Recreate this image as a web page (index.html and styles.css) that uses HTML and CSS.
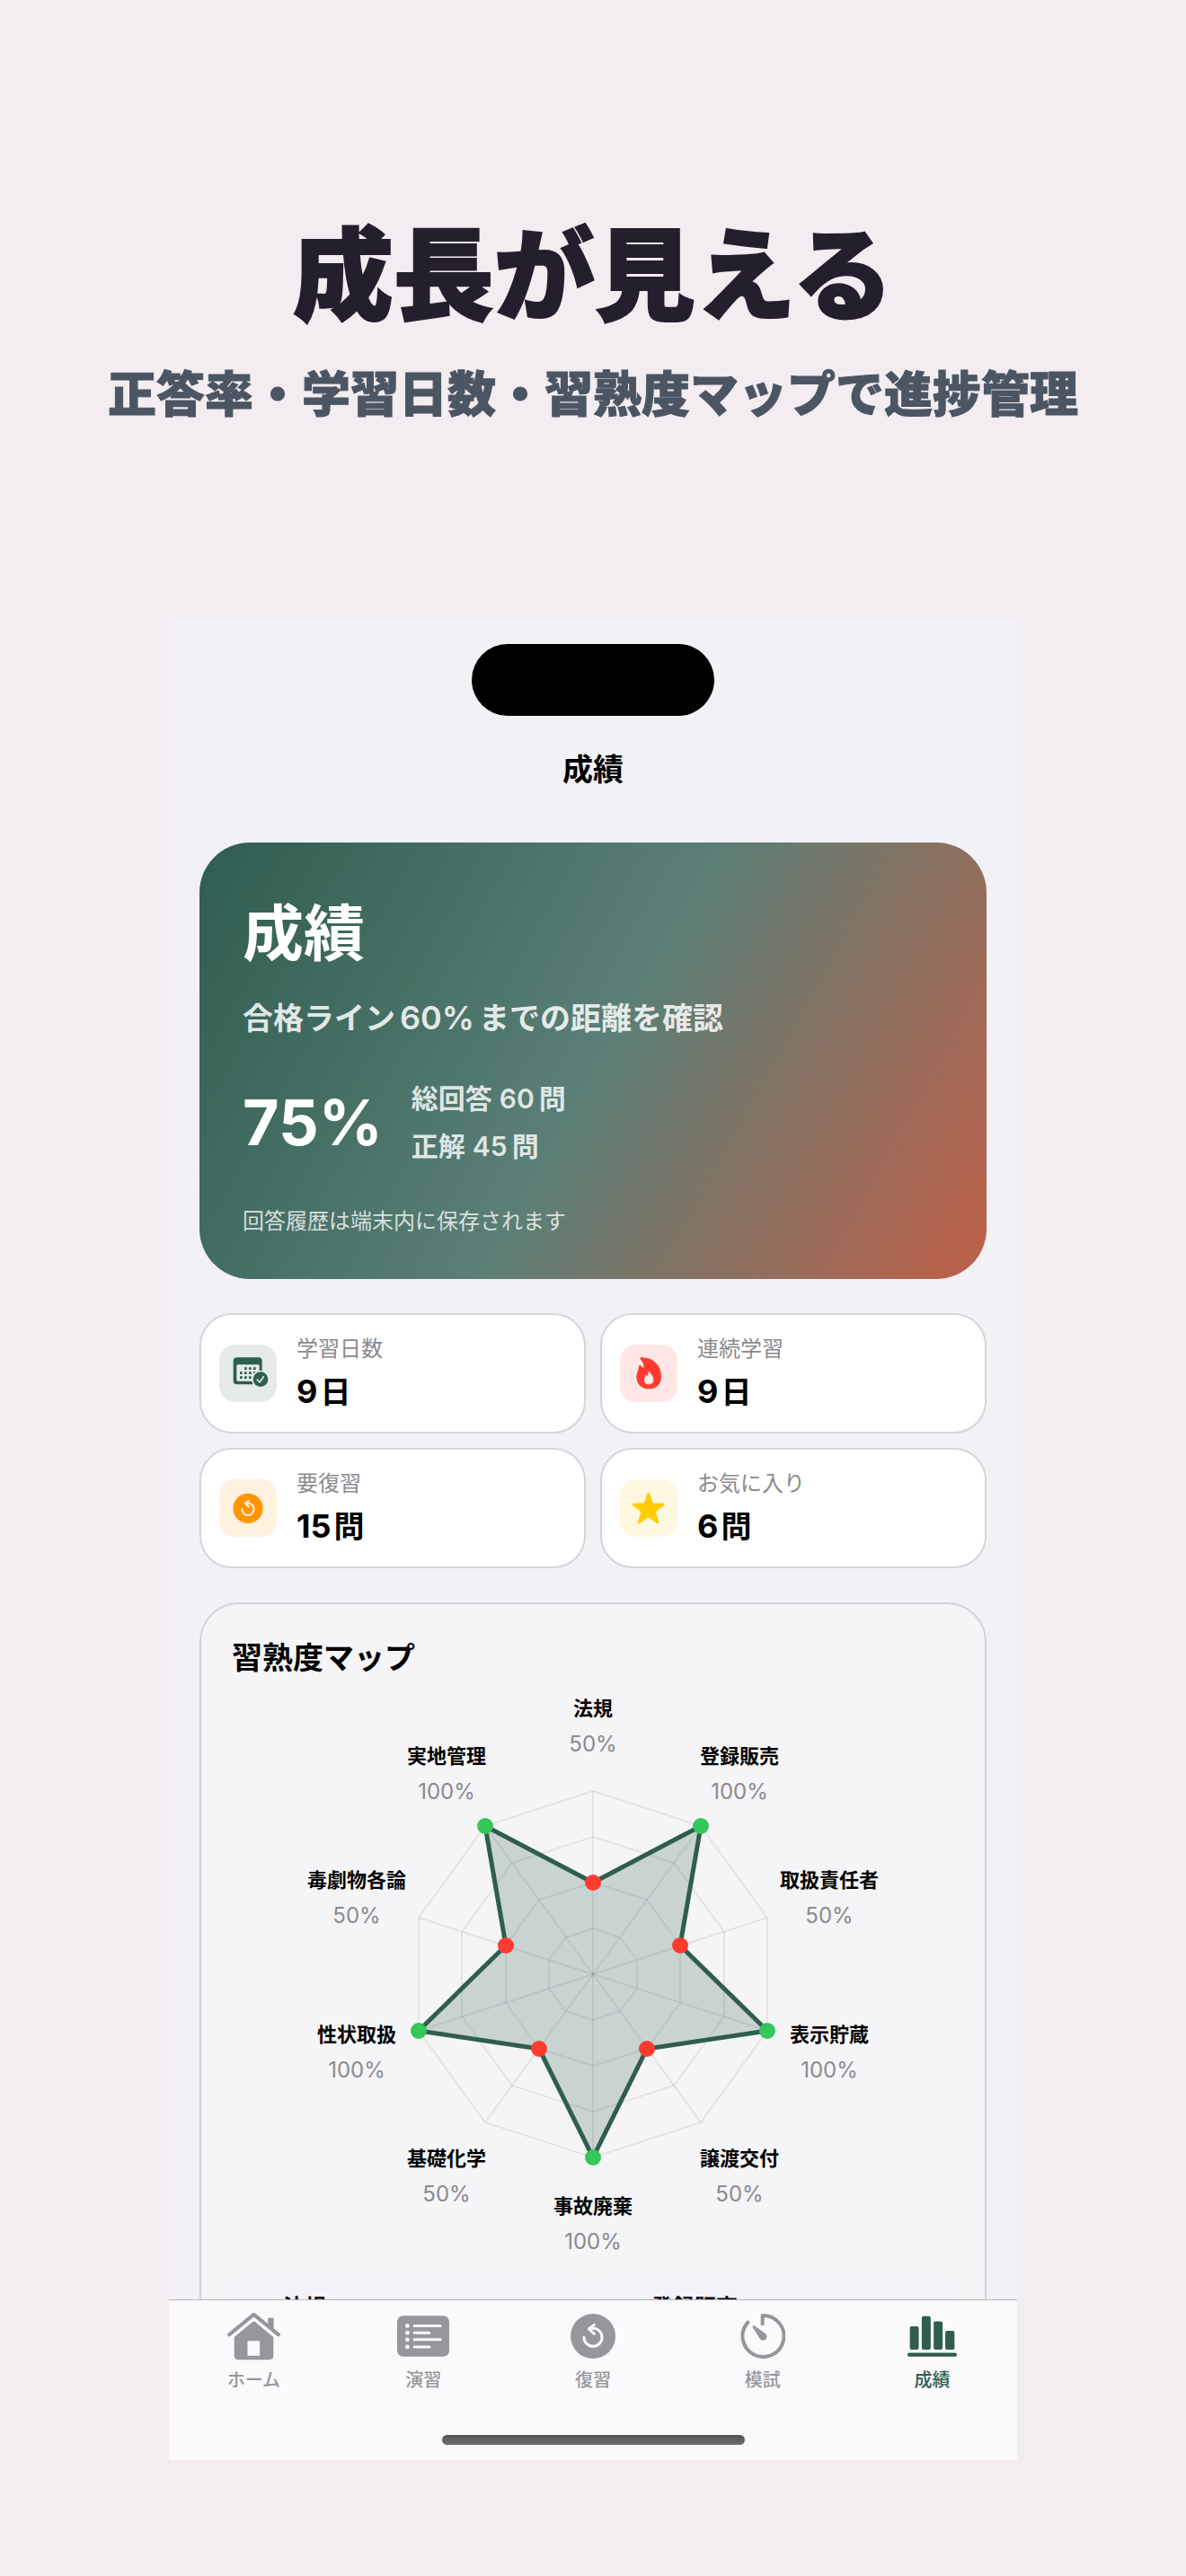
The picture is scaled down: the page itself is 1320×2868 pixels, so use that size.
FILE: index.html
```html
<!DOCTYPE html>
<html lang="ja">
<head>
  <meta charset="utf-8">
  <meta name="viewport" content="width=device-width, initial-scale=1">
  <title>成績</title>
  <link rel="stylesheet" href="styles.css">
</head>
<body>
  <svg class="defs" aria-hidden="true">
    <symbol id="retry" viewBox="0 0 150 150">
      <circle cx="75" cy="75" r="75" fill="currentColor"/>
      <path d="M45 79a30 30 0 1 0 30-30l-12 1" fill="none" stroke="var(--hole)" stroke-width="9" stroke-linecap="round"/>
      <path d="M79 37L61 51l18 16" fill="none" stroke="var(--hole)" stroke-width="9" stroke-linecap="round" stroke-linejoin="round"/>
    </symbol>
  </svg>

  <header class="intro">
    <h1>成長が見える</h1>
    <p>正答率・学習日数・習熟度マップで進捗管理</p>
  </header>

  <div class="phone">
    <div class="island"></div>
    <div class="nav-title">成績</div>

    <main class="screen">
      <section class="hero">
        <h2>成績</h2>
        <p class="hero-lead">合格ライン<span class="num">60%</span>までの距離を確認</p>
        <div class="score">
          <strong>75%</strong>
          <div class="score-detail">
            <p>総回答<span class="num">60</span>問</p>
            <p>正解<span class="num">45</span>問</p>
          </div>
        </div>
        <p class="hero-note">回答履歴は端末内に保存されます</p>
      </section>

      <section class="stats">
        <div class="stat">
          <div class="stat-icon green">
            <svg viewBox="0 0 192 192">
              <path fill="currentColor" fill-rule="evenodd" d="M59 43h72q12 0 12 12v66q0 12-12 12H59q-12 0-12-12V55q0-12 12-12zM62 67q-4 0-4 4v47q0 4 4 4h68q4 0 4-4V71q0-4-4-4z"/>
              <path fill="currentColor" d="M84 76h8v8h-8zM99 76h8v8h-8zM114 76h8v8h-8zM69 91h8v8h-8zM84 91h8v8h-8zM99 91h8v8h-8zM114 91h8v8h-8zM69 106h8v8h-8zM84 106h8v8h-8zM99 106h8v8h-8z"/>
              <circle cx="138" cy="116" r="30" fill="var(--hole)"/>
              <circle cx="138" cy="116" r="25" fill="currentColor"/>
              <path d="M127 117l8 9 13-19" fill="none" stroke="var(--hole)" stroke-width="5" stroke-linecap="round" stroke-linejoin="round"/>
            </svg>
          </div>
          <div class="stat-text">
            <span class="stat-label">学習日数</span>
            <span class="stat-value"><span class="num">9</span>日</span>
          </div>
        </div>
        <div class="stat">
          <div class="stat-icon red">
            <svg viewBox="0 0 192 192">
              <path fill="currentColor" d="M67 47C64 43 71 42 76 43C112 45 138 70 138 107C138 132 121 148 97 148C72 148 55 132 55 107C55 95 62 88 63 73C63 68 68 68 71 71C73 74 76 76 79 77C81 63 74 56 67 47z"/>
              <path fill="var(--hole)" d="M94 92C95 89 98 91 100 94C107 101 112 109 112 117C112 127 105 133 96 133C87 133 81 127 81 119C81 111 84 108 85 103C88 101 90 103 91 106C95 102 94 97 94 92z"/>
            </svg>
          </div>
          <div class="stat-text">
            <span class="stat-label">連続学習</span>
            <span class="stat-value"><span class="num">9</span>日</span>
          </div>
        </div>
        <div class="stat">
          <div class="stat-icon orange">
            <svg viewBox="0 0 192 192"><use href="#retry" x="46" y="47" width="100" height="100"/></svg>
          </div>
          <div class="stat-text">
            <span class="stat-label">要復習</span>
            <span class="stat-value"><span class="num">15</span>問</span>
          </div>
        </div>
        <div class="stat">
          <div class="stat-icon yellow">
            <svg viewBox="0 0 192 192">
              <path fill="currentColor" stroke="currentColor" stroke-width="8" stroke-linejoin="round" d="M95 49L107 83L145 84L115 107L126 144L95 122L64 144L75 107L45 84L83 83z"/>
            </svg>
          </div>
          <div class="stat-text">
            <span class="stat-label">お気に入り</span>
            <span class="stat-value"><span class="num">6</span>問</span>
          </div>
        </div>
      </section>

      <section class="map">
        <h2>習熟度マップ</h2>
        <svg class="radar" viewBox="0 0 804 644" role="img" aria-label="習熟度マップ">
          <g id="grid" class="grid"></g>
          <g id="area"></g>
          <g id="labels"></g>
        </svg>
        <div class="subjects">
          <div class="subject">法規</div>
          <div class="subject">登録販売</div>
        </div>
      </section>
    </main>

    <nav class="tabs">
      <a href="#home">
        <svg width="59" height="53" viewBox="0 0 176 158">
          <path d="M6 74L88 7l82 67" fill="none" stroke="currentColor" stroke-width="12" stroke-linecap="round" stroke-linejoin="round"/>
          <path fill="currentColor" d="M135 46V22q0-4 4-4h11q4 0 4 4v39z"/>
          <path fill="currentColor" fill-rule="evenodd" d="M23 82L83 32q5-4 10 0l60 50v62q0 13-13 13H36q-13 0-13-13zM70 95q-3 0-3 3v46h41V98q0-3-3-3z"/>
        </svg>
        <span>ホーム</span>
      </a>
      <a href="#practice">
        <svg width="58" height="45" viewBox="0 0 173 135">
          <rect width="173" height="135" rx="20" fill="currentColor"/>
          <g fill="var(--hole)">
            <circle cx="34" cy="33" r="7"/><circle cx="34" cy="56" r="7"/><circle cx="34" cy="79" r="7"/><circle cx="34" cy="103" r="7"/>
          </g>
          <path d="M57 33h87M57 56h50M57 79h87M57 103h50" stroke="var(--hole)" stroke-width="9" stroke-linecap="round"/>
        </svg>
        <span>演習</span>
      </a>
      <a href="#review">
        <svg width="50" height="50"><use href="#retry"/></svg>
        <span>復習</span>
      </a>
      <a href="#exam">
        <svg width="50" height="50" viewBox="0 0 150 150">
          <path d="M74 34V6a69 69 0 1 1-49 23" fill="none" stroke="currentColor" stroke-width="12" stroke-linecap="round" stroke-linejoin="round"/>
          <path fill="currentColor" d="M41 45q-1-7 6-5l35 25a13 13 0 1 1-18 17z"/>
        </svg>
        <span>模試</span>
      </a>
      <a href="#results" class="active">
        <svg width="55" height="46" viewBox="0 0 166 138">
          <g fill="currentColor">
            <rect x="8" y="36" width="30" height="78" rx="6"/>
            <rect x="48" y="2" width="30" height="112" rx="6"/>
            <rect x="88" y="19" width="30" height="95" rx="6"/>
            <rect x="127" y="51" width="31" height="63" rx="6"/>
            <rect y="125" width="166" height="13" rx="6"/>
          </g>
        </svg>
        <span>成績</span>
      </a>
      <div class="home-bar"></div>
    </nav>
  </div>
  <script src="radar.js"></script>
</body>
</html>
```

FILE: styles.css
```css
* {
  box-sizing: border-box;
}
body {
  margin: 0;
  background: #f3ecf0;
  color: #000;
  font-family: Inter, "Noto Sans CJK JP", sans-serif;
  font-size: 24px;
}
h1, h2, p {
  margin: 0;
}
.defs {
  display: none;
}

.intro {
  padding-top: 239px;
  text-align: center;
  font-family: "Noto Sans CJK JP", sans-serif;
  font-weight: 900;
}
.intro h1 {
  color: #241f2d;
  font-size: 112px;
  font-weight: 900;
  line-height: 120px;
  -webkit-text-stroke: 2px #241f2d;
}
.intro p {
  margin-top: 47px;
  color: #4b5563;
  font-size: 54px;
  line-height: 60px;
  -webkit-text-stroke: 1px #4b5563;
}

.phone {
  display: flex;
  flex-direction: column;
  margin: 222px 188px 129px;
  padding-top: 29px;
  aspect-ratio: 944 / 2051;
  background: #f2f1f6;
  overflow: hidden;
}
.island {
  flex: none;
  align-self: center;
  width: 270px;
  height: 80px;
  border-radius: 40px;
  background: #000;
}
.nav-title {
  margin-top: 38px;
  text-align: center;
  font-size: 34px;
  font-weight: 700;
  line-height: 44px;
}
.screen {
  flex: 1;
  min-height: 0;
  padding: 59px 34px 0;
  overflow: hidden;
}
.num {
  font-size: 36px;
  line-height: 1;
}

.hero {
  padding: 61px 48px 48px;
  border-radius: 56px;
  background: linear-gradient(119deg, #2f5d50, #5a7f76 50%, #c06048);
  color: #fff;
}
.hero h2 {
  font-size: 68px;
  line-height: 80px;
}
.hero-lead {
  margin-top: 33px;
  color: rgba(255, 255, 255, .86);
  font-size: 34px;
  font-weight: 600;
  line-height: 44px;
}
.hero-lead .num {
  margin: 0 5px;
}
.score {
  display: flex;
  align-items: center;
  gap: 32px;
  margin-top: 41px;
}
.score strong {
  font-size: 70px;
  line-height: 80px;
}
.score-detail {
  color: rgba(255, 255, 255, .82);
  font-size: 30px;
  font-weight: 600;
  line-height: 53px;
}
.score-detail .num {
  margin: 0 5px 0 8px;
  font-size: 30px;
}
.hero-note {
  margin-top: 41px;
  color: rgba(255, 255, 255, .78);
  font-size: 24px;
  line-height: 32px;
}

.stats {
  display: grid;
  grid-template-columns: 1fr 1fr;
  gap: 16px;
  margin-top: 38px;
}
.stat {
  display: flex;
  align-items: center;
  gap: 22px;
  padding: 20px;
  border: 2px solid #d5d5d9;
  border-radius: 36px;
  background: #fff;
}
.stat-icon {
  width: 64px;
  height: 64px;
  border-radius: 18px;
  background: var(--hole);
}
.stat-icon svg {
  display: block;
}
.green { --hole: #e5ebe9; color: #2f5d50; }
.red { --hole: #ffe7e6; color: #ff3b30; }
.orange { --hole: #fff1e0; color: #ff9500; }
.yellow { --hole: #fff8e0; color: #ffcc00; }
.stat-text {
  display: flex;
  flex-direction: column;
  gap: 8px;
  padding-top: 2px;
}
.stat-label {
  color: #8a8a8e;
  line-height: 32px;
}
.stat-value {
  font-size: 34px;
  font-weight: 700;
  line-height: 48px;
}
.stat-value .num {
  margin-right: 3px;
}

.map {
  margin-top: 38px;
  padding: 38px 34px;
  border: 2px solid #d3d3d7;
  border-radius: 44px;
  background: #f5f5f7;
}
.map h2 {
  font-size: 34px;
  line-height: 44px;
}
.radar {
  display: block;
  width: 100%;
}
.grid {
  fill: none;
  stroke: #000;
  stroke-opacity: .07;
  stroke-width: 2;
}
.area {
  fill: #2f5d50;
  fill-opacity: .22;
  stroke: #2f5d50;
  stroke-width: 5;
  stroke-linejoin: round;
}
.high { fill: #34c759; }
.low { fill: #ff3b30; }
.axis-name {
  font-size: 22px;
  font-weight: 700;
  text-anchor: middle;
}
.axis-value {
  fill: #8a8a8e;
  font-size: 24px;
  text-anchor: middle;
}
.subjects {
  display: grid;
  grid-template-columns: 1fr 1fr;
  gap: 16px;
  margin-top: 16px;
}
.subject {
  padding: 25px 57px;
  border-radius: 26px;
  background: #f3f2f7;
  font-weight: 700;
  line-height: 32px;
}

.tabs {
  --hole: #fafafc;
  flex: none;
  display: grid;
  grid-template-columns: repeat(5, 1fr);
  padding: 13px 0 17px;
  border-top: 1px solid #b7b7bb;
  background: #fafafc;
}
.tabs a {
  display: flex;
  flex-direction: column;
  align-items: center;
  color: #97979b;
  font-size: 20px;
  font-weight: 500;
  line-height: 28px;
  text-decoration: none;
}
.tabs a svg {
  height: 54px;
}
.tabs a span {
  margin-top: 8px;
}
.tabs .active {
  color: #2f5d50;
}
.home-bar {
  grid-column: 1 / -1;
  justify-self: center;
  width: 337px;
  height: 11px;
  margin-top: 47px;
  border-radius: 6px;
  background: linear-gradient(#525252, #707070);
}
```

FILE: radar.js
```js
const subjects = [
  ["法規", 50],
  ["登録販売", 100],
  ["取扱責任者", 50],
  ["表示貯蔵", 100],
  ["譲渡交付", 50],
  ["事故廃棄", 100],
  ["基礎化学", 50],
  ["性状取扱", 100],
  ["毒劇物各論", 50],
  ["実地管理", 100]
];
const cx = 402;
const cy = 330;
const radius = 204;
const labelRadius = 277;

function point(i, r) {
  const a = Math.PI * 2 * i / subjects.length - Math.PI / 2;
  return [Math.round(cx + Math.cos(a) * r), Math.round(cy + Math.sin(a) * r)];
}

let grid = "";
for (const step of [0.25, 0.5, 0.75, 1]) {
  grid += `<polygon points="${subjects.map((s, i) => point(i, radius * step)).join(" ")}"/>`;
}
let dots = "";
let labels = "";
subjects.forEach(([name, value], i) => {
  const [x, y] = point(i, radius);
  grid += `<path d="M${cx} ${cy}L${x} ${y}"/>`;
  const [px, py] = point(i, radius * value / 100);
  dots += `<circle cx="${px}" cy="${py}" r="9" class="${value >= 80 ? "high" : "low"}"/>`;
  const [lx, ly] = point(i, labelRadius);
  labels += `<text class="axis-name" x="${lx}" y="${ly - 11}">${name}</text>`;
  labels += `<text class="axis-value" x="${lx}" y="${ly + 29}">${value}%</text>`;
});

const shape = subjects.map((s, i) => point(i, radius * s[1] / 100)).join(" ");
document.getElementById("grid").innerHTML = grid;
document.getElementById("area").innerHTML = `<polygon class="area" points="${shape}"/>` + dots;
document.getElementById("labels").innerHTML = labels;
```
